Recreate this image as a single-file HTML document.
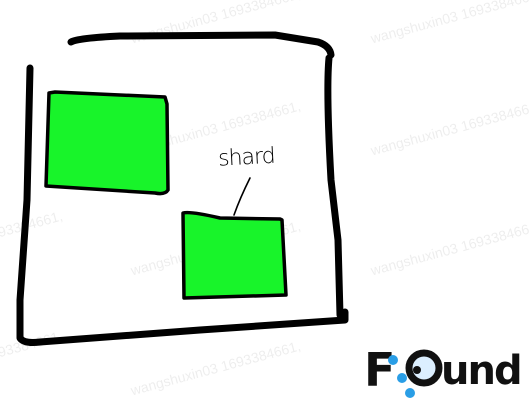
<!DOCTYPE html>
<html><head><style>
body{margin:0;width:529px;height:410px;background:#fff;overflow:hidden;position:relative;font-family:"Liberation Sans",sans-serif}
.wm{position:absolute;color:rgba(0,0,0,0.07);font-size:14px;transform:rotate(-15deg);white-space:nowrap}
</style></head><body>
<div class="wm" style="left:128px;top:8px">wangshuxin03 1693384661,</div>
<div class="wm" style="left:368px;top:8px">wangshuxin03 1693384661,</div>
<div class="wm" style="left:128px;top:120px">wangshuxin03 1693384661,</div>
<div class="wm" style="left:368px;top:120px">wangshuxin03 1693384661,</div>
<div class="wm" style="left:-110px;top:230px">wangshuxin03 1693384661,</div>
<div class="wm" style="left:128px;top:240px">wangshuxin03 1693384661,</div>
<div class="wm" style="left:368px;top:240px">wangshuxin03 1693384661,</div>
<div class="wm" style="left:-110px;top:350px">wangshuxin03 1693384661,</div>
<div class="wm" style="left:128px;top:360px">wangshuxin03 1693384661,</div>
<svg width="529" height="410" style="position:absolute;left:0;top:0">
<g fill="none" stroke="#000" stroke-linecap="round" stroke-linejoin="round">
<path d="M71,42 Q78,38 120,36 L275,35 L318,42 Q330,46 331,55" stroke-width="7"/>
<path d="M329,58 Q326,90 331,180 L338,240 L340,315" stroke-width="7"/>
<path d="M30,68 L27,200 L20,300 L20,338 Q24,344 40,342 L200,330 L345,320 L345,312" stroke-width="7"/>
<path d="M49,93 L55,92 L165,97 L167,104 L168,190 Q165,195 155,193 L46,186 Z" fill="#18f42a" stroke-width="3.5"/>
<path d="M183,213 Q190,211 220,218 L280,219 L282,220 L286,295 L184,298 Z" fill="#18f42a" stroke-width="3.5"/>
<path d="M250,178 Q240,198 234,215" stroke-width="1.6"/>
</g>
<text x="218" y="164" font-family="DejaVu Sans,sans-serif" font-size="22" fill="#000" transform="rotate(-3 250 155)" style="font-weight:200" letter-spacing="-1">shard</text>
<g>
<text x="364" y="386" font-family="DejaVu Sans,sans-serif" font-weight="bold" font-size="46" fill="#111">F</text>
<circle cx="424" cy="368" r="15" fill="#dcefff" stroke="#111" stroke-width="7"/>
<circle cx="417" cy="370" r="4" fill="#111"/>
<circle cx="393" cy="360" r="5" fill="#2a9ee6"/>
<circle cx="402" cy="378" r="5" fill="#2a9ee6"/>
<circle cx="410" cy="393" r="5" fill="#2a9ee6"/>
<text x="441" y="384" font-family="DejaVu Sans,sans-serif" font-weight="bold" font-size="40" fill="#111" letter-spacing="-2">und</text>
</g>
</svg>
</body></html>
